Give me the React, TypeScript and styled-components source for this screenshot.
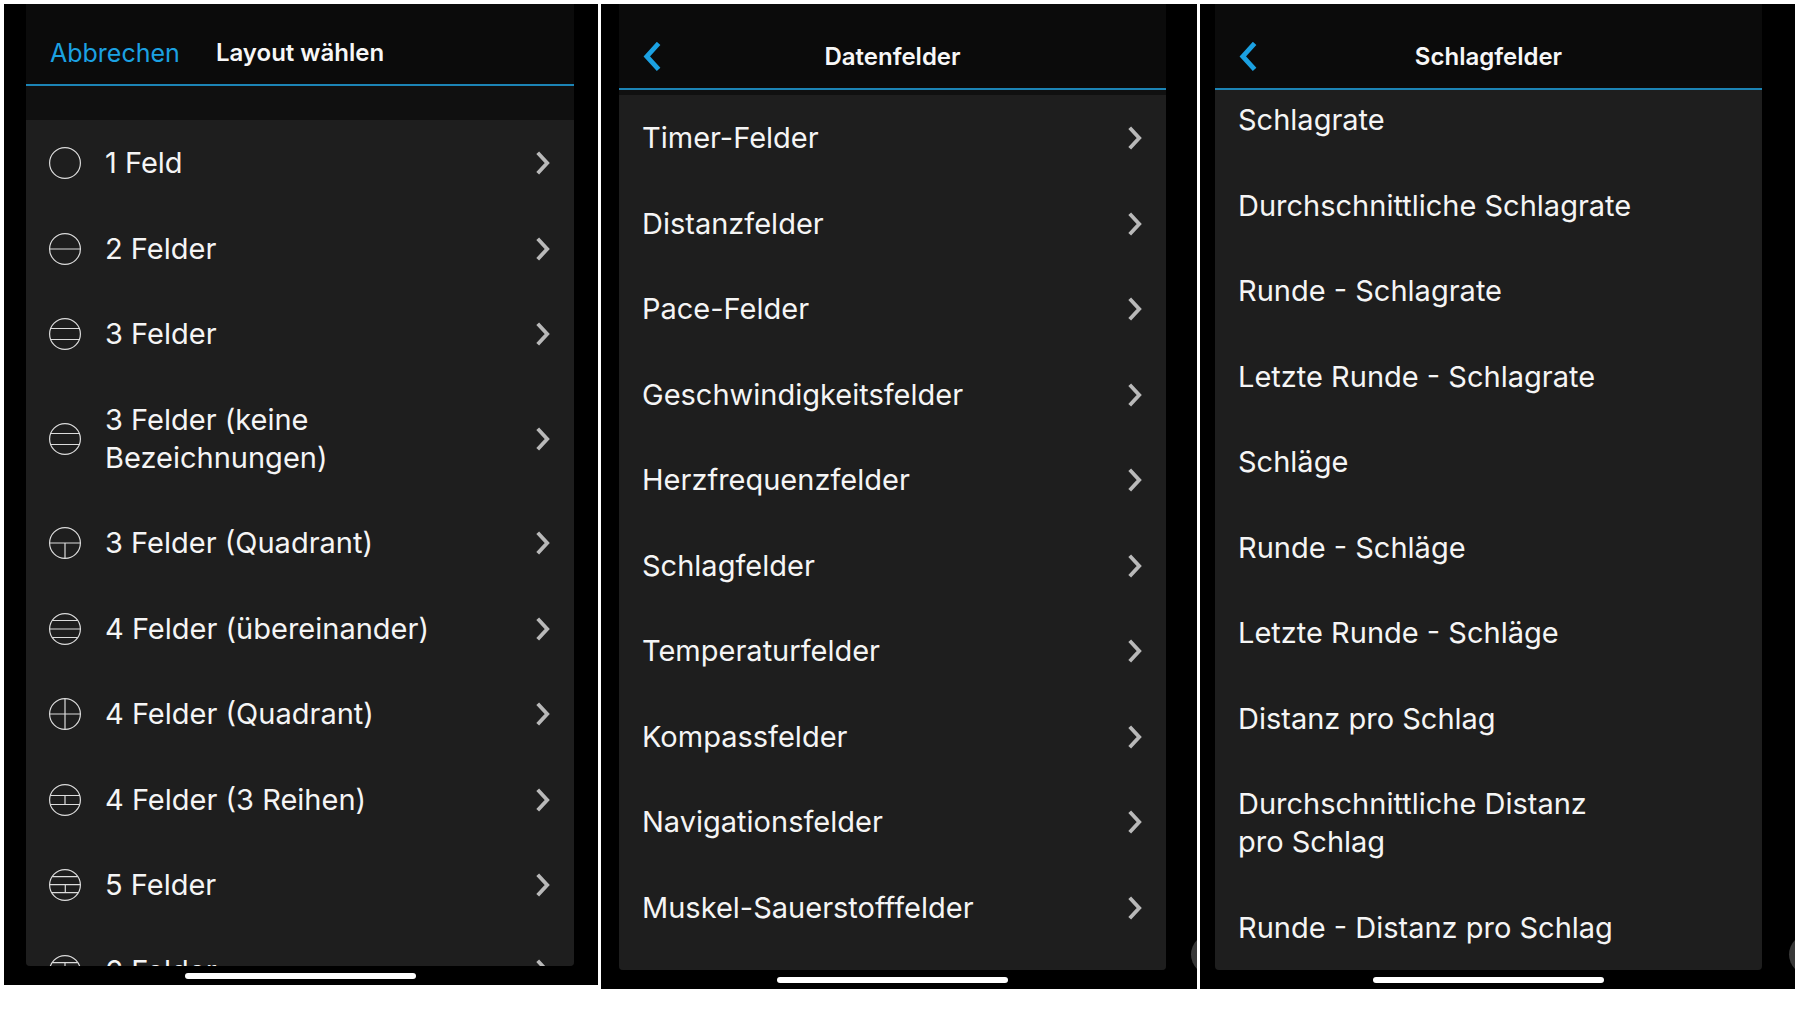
import React from "react";
import styled, { createGlobalStyle } from "styled-components";

const GlobalStyle = createGlobalStyle`
  *, *::before, *::after { box-sizing: border-box; }
  body {
    margin: 0;
    background: #fff;
    font-family: Inter, "Liberation Sans", sans-serif;
  }
`;

const Board = styled.main`
  display: grid;
  grid-template-columns: 594fr 596fr 595fr;
  gap: 3px;
  height: 100vh;
  padding: 4px 5px 23px 4px;
`;

const Phone = styled.section<{ $left: number; $right: number; $short?: boolean }>`
  position: relative;
  display: flex;
  flex-direction: column;
  min-width: 0;
  min-height: 0;
  margin-bottom: ${(p) => (p.$short ? 4 : 0)}px;
  padding: 0 ${(p) => p.$right}px 0 ${(p) => p.$left}px;
  overflow: hidden;
  background: #000;
`;

const Header = styled.header<{ $top: number }>`
  display: grid;
  grid-template-columns: 1fr auto 1fr;
  align-items: center;
  flex: none;
  padding: ${(p) => p.$top}px 24px 15px;
  border-bottom: 2px solid #1c84b5;
  background: #0b0b0b;
`;

const Title = styled.h2`
  margin: 0;
  color: #f7f7f7;
  font-size: 24px;
  font-weight: 600;
  line-height: 32px;
`;

const HeaderButton = styled.button`
  display: flex;
  align-items: center;
  justify-self: start;
  height: 32px;
  padding: 0;
  border: 0;
  background: none;
  color: #1ba1e2;
  font: inherit;
  font-size: 25px;
  line-height: 32px;
`;

const Scroller = styled.div<{ $gap: number }>`
  flex: 1;
  min-height: 0;
  padding-top: ${(p) => p.$gap}px;
  overflow: hidden;
  border-radius: 0 0 4px 4px;
  background: #101010;
`;

const List = styled.ul<{ $scrolled?: number }>`
  min-height: 100%;
  margin: ${(p) => -(p.$scrolled ?? 0)}px 0 0;
  padding: 0;
  list-style: none;
  background: #1e1e1e;
`;

const Row = styled.button`
  display: flex;
  align-items: center;
  gap: 24px;
  width: 100%;
  padding: 24px 24px 24px 23px;
  border: 0;
  background: none;
  color: #f5f5f5;
  font: inherit;
  font-size: 29px;
  line-height: 38px;
  text-align: left;

  li:nth-child(even) > & {
    padding-bottom: 23px;
  }
`;

const Label = styled.span`
  flex: 1;
  min-width: 0;
`;

const EndSpace = styled.span`
  flex: none;
  width: 14px;
`;

const Icon = styled.svg`
  flex: none;
  display: block;
  fill: none;
`;

const Footer = styled.footer`
  display: flex;
  justify-content: center;
  flex: none;
  padding: 7px 0 6px;
`;

const HomeIndicator = styled.span`
  width: 231px;
  height: 6px;
  border-radius: 3px;
  background: #fff;
`;

const AssistDot = styled.span`
  position: absolute;
  right: -35px;
  bottom: 14px;
  width: 41px;
  height: 41px;
  border-radius: 50%;
  background: #383838;
`;

const layouts: { label: string; lines: string }[] = [
  { label: "1 Feld", lines: "" },
  { label: "2 Felder", lines: "M.5 16h31" },
  { label: "3 Felder", lines: "M1.5 10.5h29M1.5 21.5h29" },
  { label: "3 Felder (keine Bezeichnungen)", lines: "M1.5 10.5h29M1.5 21.5h29" },
  { label: "3 Felder (Quadrant)", lines: "M.5 16h31M16 16v15.5" },
  { label: "4 Felder (übereinander)", lines: "M3.2 7.5h25.6M.5 16h31M3.2 24.5h25.6" },
  { label: "4 Felder (Quadrant)", lines: "M.5 16h31M16 .5v31" },
  { label: "4 Felder (3 Reihen)", lines: "M1.2 11.5h29.6M1.2 20.5h29.6M16 11.5v9" },
  { label: "5 Felder", lines: "M3.2 7.7h25.6M.5 15.7h31M3 23.7h26M16.3 15.7v8" },
  { label: "6 Felder", lines: "M3.2 7.7h25.6M.5 15.7h31M3 23.7h26M16 7.7v16" },
];

const dataFields = [
  "Timer-Felder",
  "Distanzfelder",
  "Pace-Felder",
  "Geschwindigkeitsfelder",
  "Herzfrequenzfelder",
  "Schlagfelder",
  "Temperaturfelder",
  "Kompassfelder",
  "Navigationsfelder",
  "Muskel-Sauerstofffelder",
];

const strokeFields = [
  "Schlagrate",
  "Durchschnittliche Schlagrate",
  "Runde - Schlagrate",
  "Letzte Runde - Schlagrate",
  "Schläge",
  "Runde - Schläge",
  "Letzte Runde - Schläge",
  "Distanz pro Schlag",
  "Durchschnittliche Distanz pro\u00a0Schlag",
  "Runde - Distanz pro Schlag",
];

const Forward = () => (
  <Icon width="14" height="24" viewBox="0 0 14 24" stroke="#b9b9b9" strokeWidth="3.8" aria-hidden="true">
    <path d="M1.7 1.8 11.2 12 1.7 22.2" />
  </Icon>
);

const Back = () => (
  <HeaderButton aria-label="Zurück">
    <Icon width="18" height="30" viewBox="0 0 18 30" stroke="#1ba1e2" strokeWidth="4.8" aria-hidden="true">
      <path d="M15.6 1.4 3.8 14.4l11.8 13" />
    </Icon>
  </HeaderButton>
);

const LayoutIcon = ({ lines }: { lines: string }) => (
  <Icon width="32" height="32" viewBox="0 0 32 32" stroke="#dcdcdc" strokeWidth="1.2" aria-hidden="true">
    <circle cx="16" cy="16" r="15.4" />
    <path d={lines} />
  </Icon>
);

const HomeBar = () => (
  <Footer>
    <HomeIndicator />
  </Footer>
);

export default function App() {
  return (
    <>
      <GlobalStyle />
      <Board>
        <Phone $left={22} $right={24} $short>
          <Header $top={33}>
            <HeaderButton>Abbrechen</HeaderButton>
            <Title>Layout wählen</Title>
          </Header>
          <Scroller $gap={34}>
            <List>
              {layouts.map((item) => (
                <li key={item.label}>
                  <Row>
                    <LayoutIcon lines={item.lines} />
                    <Label>{item.label}</Label>
                    <Forward />
                  </Row>
                </li>
              ))}
            </List>
          </Scroller>
          <HomeBar />
        </Phone>

        <Phone $left={18} $right={31}>
          <Header $top={37}>
            <Back />
            <Title>Datenfelder</Title>
          </Header>
          <Scroller $gap={5}>
            <List>
              {dataFields.map((label) => (
                <li key={label}>
                  <Row>
                    <Label>{label}</Label>
                    <Forward />
                  </Row>
                </li>
              ))}
            </List>
          </Scroller>
          <HomeBar />
          <AssistDot />
        </Phone>

        <Phone $left={15} $right={33}>
          <Header $top={37}>
            <Back />
            <Title>Schlagfelder</Title>
          </Header>
          <Scroller $gap={0}>
            <List $scrolled={13}>
              {strokeFields.map((label) => (
                <li key={label}>
                  <Row>
                    <Label>{label}</Label>
                    <EndSpace />
                  </Row>
                </li>
              ))}
            </List>
          </Scroller>
          <HomeBar />
          <AssistDot />
        </Phone>
      </Board>
    </>
  );
}
